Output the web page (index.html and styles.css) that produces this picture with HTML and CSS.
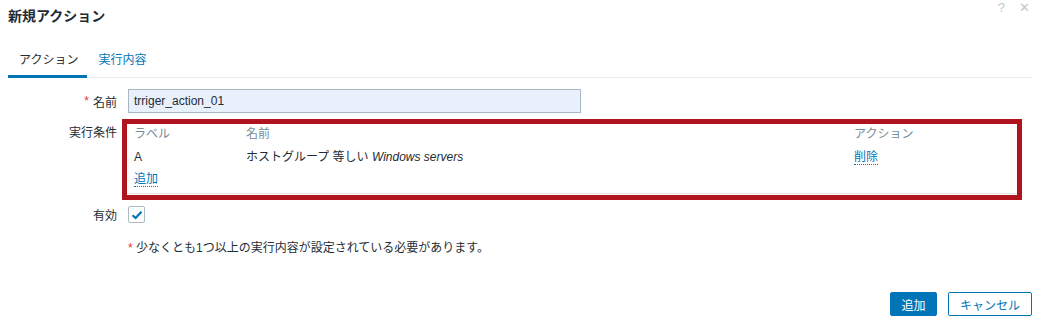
FILE: index.html
```html
<!DOCTYPE html>
<html lang="ja">
<head>
<meta charset="utf-8">
<link rel="stylesheet" href="styles.css">
</head>
<body>
<div class="dialog">
  <div class="header">
    <h4 class="title">新規アクション</h4>
    <div class="header-icons">
      <span class="hicon">?</span>
      <span class="hicon close">✕</span>
    </div>
  </div>
  <ul class="tabs">
    <li class="tab active">アクション</li>
    <li class="tab">実行内容</li>
  </ul>
  <div class="form">
    <div class="row row-name">
      <label class="lbl"><span class="req">*</span> 名前</label>
      <div class="field"><input class="text-input" type="text" value="trriger_action_01"></div>
    </div>
    <div class="row row-cond">
      <label class="lbl lbl-top">実行条件</label>
      <div class="field">
        <div class="cond-box">
          <div class="cond-inner">
            <div class="cond-grid head">
              <span>ラベル</span><span>名前</span><span>アクション</span>
            </div>
            <div class="cond-grid data">
              <span>A</span><span>ホストグループ 等しい <em>Windows servers</em></span><span><a class="link">削除</a></span>
            </div>
            <div class="cond-add"><a class="link">追加</a></div>
          </div>
        </div>
      </div>
    </div>
    <div class="row row-enabled">
      <label class="lbl">有効</label>
      <div class="field"><span class="checkbox"><svg width="12" height="10" viewBox="0 0 12 10"><path d="M1.5 5.2 L4.6 8 L10.5 1.8" fill="none" stroke="#0275b8" stroke-width="2.2"/></svg></span></div>
    </div>
    <div class="row row-note">
      <div class="lbl"></div>
      <div class="field note"><span class="req">*</span> 少なくとも1つ以上の実行内容が設定されている必要があります。</div>
    </div>
  </div>
  <div class="footer">
    <button class="btn primary">追加</button>
    <button class="btn secondary">キャンセル</button>
  </div>
</div>
</body>
</html>
```

FILE: styles.css
```css
* { box-sizing: border-box; }
html, body { margin: 0; padding: 0; background: #fff; }
body {
  font-family: "Liberation Sans", Arial, "Noto Sans CJK JP", sans-serif;
  font-size: 12px;
  color: #1f2c33;
}
.dialog { width: 1040px; height: 324px; padding: 0 8px; }
.header {
  display: flex;
  justify-content: space-between;
  align-items: flex-start;
  height: 45px;
}
.title {
  margin: 0;
  padding-top: 7px;
  font-size: 14px;
  font-weight: bold;
  line-height: 18px;
}
.header-icons { display: flex; gap: 14px; padding-top: 1px; padding-right: 2px; }
.hicon { color: #c0c8ce; font-size: 13px; line-height: 14px; }
.hicon.close { font-size: 13px; }
.tabs {
  list-style: none;
  margin: 0;
  padding: 0;
  display: flex;
  height: 33px;
  border-bottom: 1px solid #ebeef0;
}
.tab {
  padding: 0 9px 0 11px;
  line-height: 30px;
  color: #0275b8;
  border-bottom: 3px solid transparent;
  height: 33px;
}
.tab.active { color: #1f2c33; border-bottom-color: #0275b8; }
.form { padding-top: 11px; }
.row { display: grid; grid-template-columns: 114px 1fr; }
.lbl {
  padding-right: 5px;
  text-align: right;
  display: flex;
  align-items: center;
  justify-content: flex-end;
  gap: 4px;
}
.lbl-top { align-items: flex-start; padding-top: 7px; line-height: 14px; }
.req { color: #e33734; }
.text-input {
  margin-left: 6px;
  width: 453px;
  height: 24px;
  border: 1px solid #a9b7c4;
  background: #e8f0fb;
  font-family: "Liberation Sans", Arial, sans-serif;
  font-size: 12px;
  color: #1f2c33;
  padding: 0 5px;
  outline: none;
}
.row-cond { margin-top: 6px; }
.cond-box {
  width: 900px;
  border: 5px solid #b0151f;
  background: #fff;
}
.cond-inner {
  padding: 0 0 1px 7px;
  border-bottom: 1px solid #e3e6e8;
  margin-bottom: 1px;
}
.cond-grid { display: grid; grid-template-columns: 112px 608px 1fr; }
.cond-grid.head { line-height: 20px; color: #768d99; }
.cond-grid.data { line-height: 22px; margin-top: 2px; }
.cond-add { line-height: 22px; padding-bottom: 2px; }
.link {
  color: #0275b8;
  text-decoration: none;
  border-bottom: 1px dotted #0275b8;
  line-height: 14px;
}
em { font-style: italic; }
.row-enabled { margin-top: 6px; height: 17px; }
.checkbox {
  margin-left: 6px;
  width: 17px;
  height: 17px;
  border: 1px solid #acbbc2;
  border-radius: 2px;
  display: flex;
  align-items: center;
  justify-content: center;
  background: #fff;
}
.row-note { margin-top: 17px; line-height: 16px; }
.note { padding-left: 6px; }
.footer {
  display: flex;
  justify-content: flex-end;
  gap: 11px;
  margin-top: 36px;
}
.btn {
  height: 24px;
  font-family: "Liberation Sans", Arial, "Noto Sans CJK JP", sans-serif;
  font-size: 12px;
  border-radius: 2px;
  padding: 0;
  white-space: nowrap;
  border: 1px solid #0275b8;
  cursor: pointer;
  text-align: center;
}
.btn.primary { background: #0275b8; color: #fff; width: 47px; }
.btn.secondary { background: #fff; color: #0275b8; width: 84px; }
```
